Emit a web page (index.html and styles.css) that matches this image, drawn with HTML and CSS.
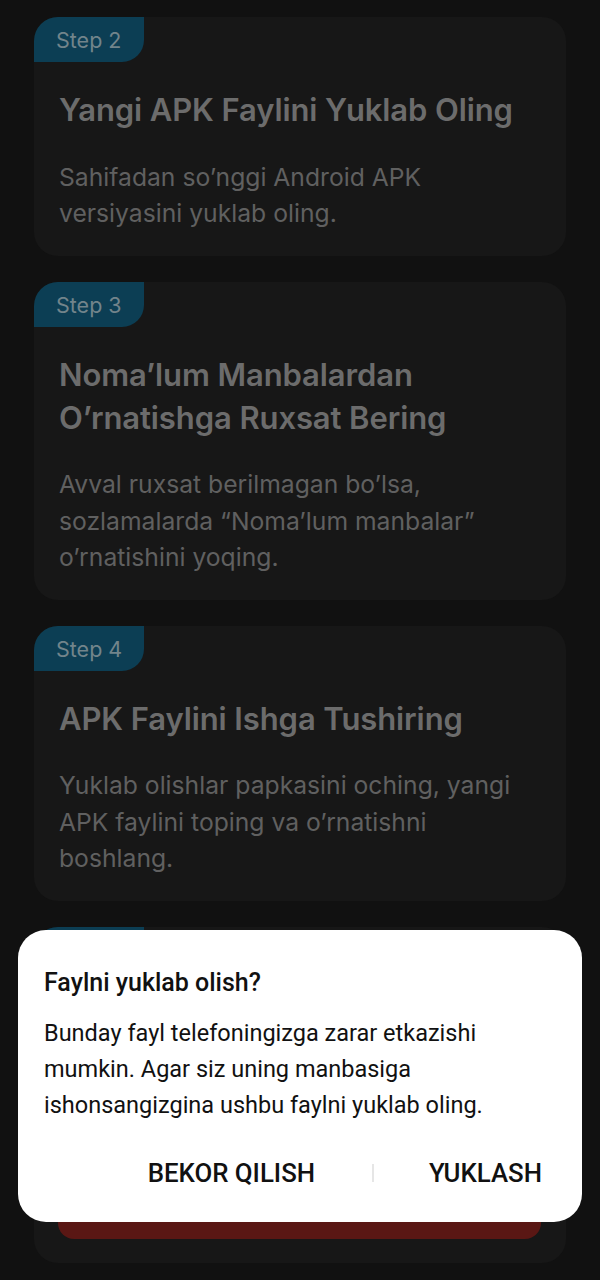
FILE: index.html
```html
<!DOCTYPE html>
<html lang="uz">
<head>
<meta charset="utf-8">
<title>APK o'rnatish</title>
<link rel="stylesheet" href="styles.css">
</head>
<body>
<main class="steps">
  <section class="card">
    <div class="badge">Step 2</div>
    <h2 class="title">Yangi APK Faylini Yuklab Oling</h2>
    <p class="desc">Sahifadan so’nggi Android APK versiyasini yuklab oling.</p>
  </section>
  <section class="card">
    <div class="badge">Step 3</div>
    <h2 class="title">Noma’lum Manbalardan O’rnatishga Ruxsat Bering</h2>
    <p class="desc">Avval ruxsat berilmagan bo’lsa, sozlamalarda “Noma’lum manbalar” o’rnatishini yoqing.</p>
  </section>
  <section class="card">
    <div class="badge">Step 4</div>
    <h2 class="title">APK Faylini Ishga Tushiring</h2>
    <p class="desc">Yuklab olishlar papkasini oching, yangi APK faylini toping va o’rnatishni boshlang.</p>
  </section>
  <section class="card">
    <div class="badge">Step 5</div>
    <h2 class="title">Ilovani Oching</h2>
    <p class="desc">O’rnatish tugagach, ilovani oching va tizimga kiring.</p>
    <div class="cta">Yuklab olish</div>
  </section>
</main>

<div class="scrim">
  <div class="dialog" role="dialog">
    <h3 class="d-title">Faylni yuklab olish?</h3>
    <p class="d-body">Bunday fayl telefoningizga zarar etkazishi mumkin. Agar siz uning manbasiga ishonsangizgina ushbu faylni yuklab oling.</p>
    <div class="d-actions">
      <span class="d-btn">BEKOR QILISH</span>
      <span class="d-sep"></span>
      <span class="d-btn">YUKLASH</span>
    </div>
  </div>
</div>
</body>
</html>
```

FILE: styles.css
```css
* { box-sizing: border-box; }
html, body {
  margin: 0;
  padding: 0;
  background: #111111;
}
body {
  width: 600px;
  height: 1280px;
  overflow: hidden;
  font-family: Inter, "Noto Sans", sans-serif;
}
.steps {
  display: flex;
  flex-direction: column;
  gap: 26px;
  padding: 17px 34px 0 34px;
}
.card {
  background: #171717;
  border-radius: 24px;
  padding: 0 25px 24px 25px;
  display: flex;
  flex-direction: column;
  align-items: flex-start;
}
.badge {
  margin-left: -25px;
  height: 45px;
  width: 110px;
  background: #0c3e54;
  border-radius: 24px 0 22px 0;
  color: #72848b;
  font-size: 21.5px;
  line-height: 47px;
  padding-left: 22px;
}
.title {
  margin: 26px 0 0 0;
  font-size: 31px;
  line-height: 43px;
  font-weight: 600;
  color: #6c6c6c;
  letter-spacing: -0.1px;
}
.desc {
  margin: 27.5px 0 0 0;
  font-size: 24.7px;
  line-height: 36.5px;
  color: #606060;
  font-weight: 400;
}
.cta {
  align-self: stretch;
  margin: 42px 0 0 -1px;
  height: 56px;
  border-radius: 16px;
  background: #5a1714;
  color: #8a4a46;
  font-size: 22px;
  line-height: 56px;
  text-align: center;
}

.scrim {
  position: fixed;
  inset: 0;
}
.dialog {
  position: absolute;
  left: 18px;
  top: 930px;
  width: 564px;
  height: 292px;
  background: #ffffff;
  border-radius: 28px;
  padding: 38px 40px 0 26px;
  font-family: Roboto, "Noto Sans", sans-serif;
  color: #111111;
}
.d-title {
  margin: 0;
  font-size: 25px;
  line-height: 30px;
  font-weight: 500;
}
.d-body {
  margin: 17px 0 0 0;
  font-size: 23.5px;
  line-height: 36px;
  font-weight: 400;
}
.d-actions {
  margin-top: 35px;
  display: flex;
  justify-content: flex-end;
  align-items: center;
  height: 30px;
}
.d-btn {
  font-size: 25.8px;
  font-weight: 500;
  line-height: 30px;
  color: #111111;
}
.d-sep {
  width: 2px;
  height: 18px;
  background: #e6e6e6;
  margin: 0 55px 0 57px;
}
```
